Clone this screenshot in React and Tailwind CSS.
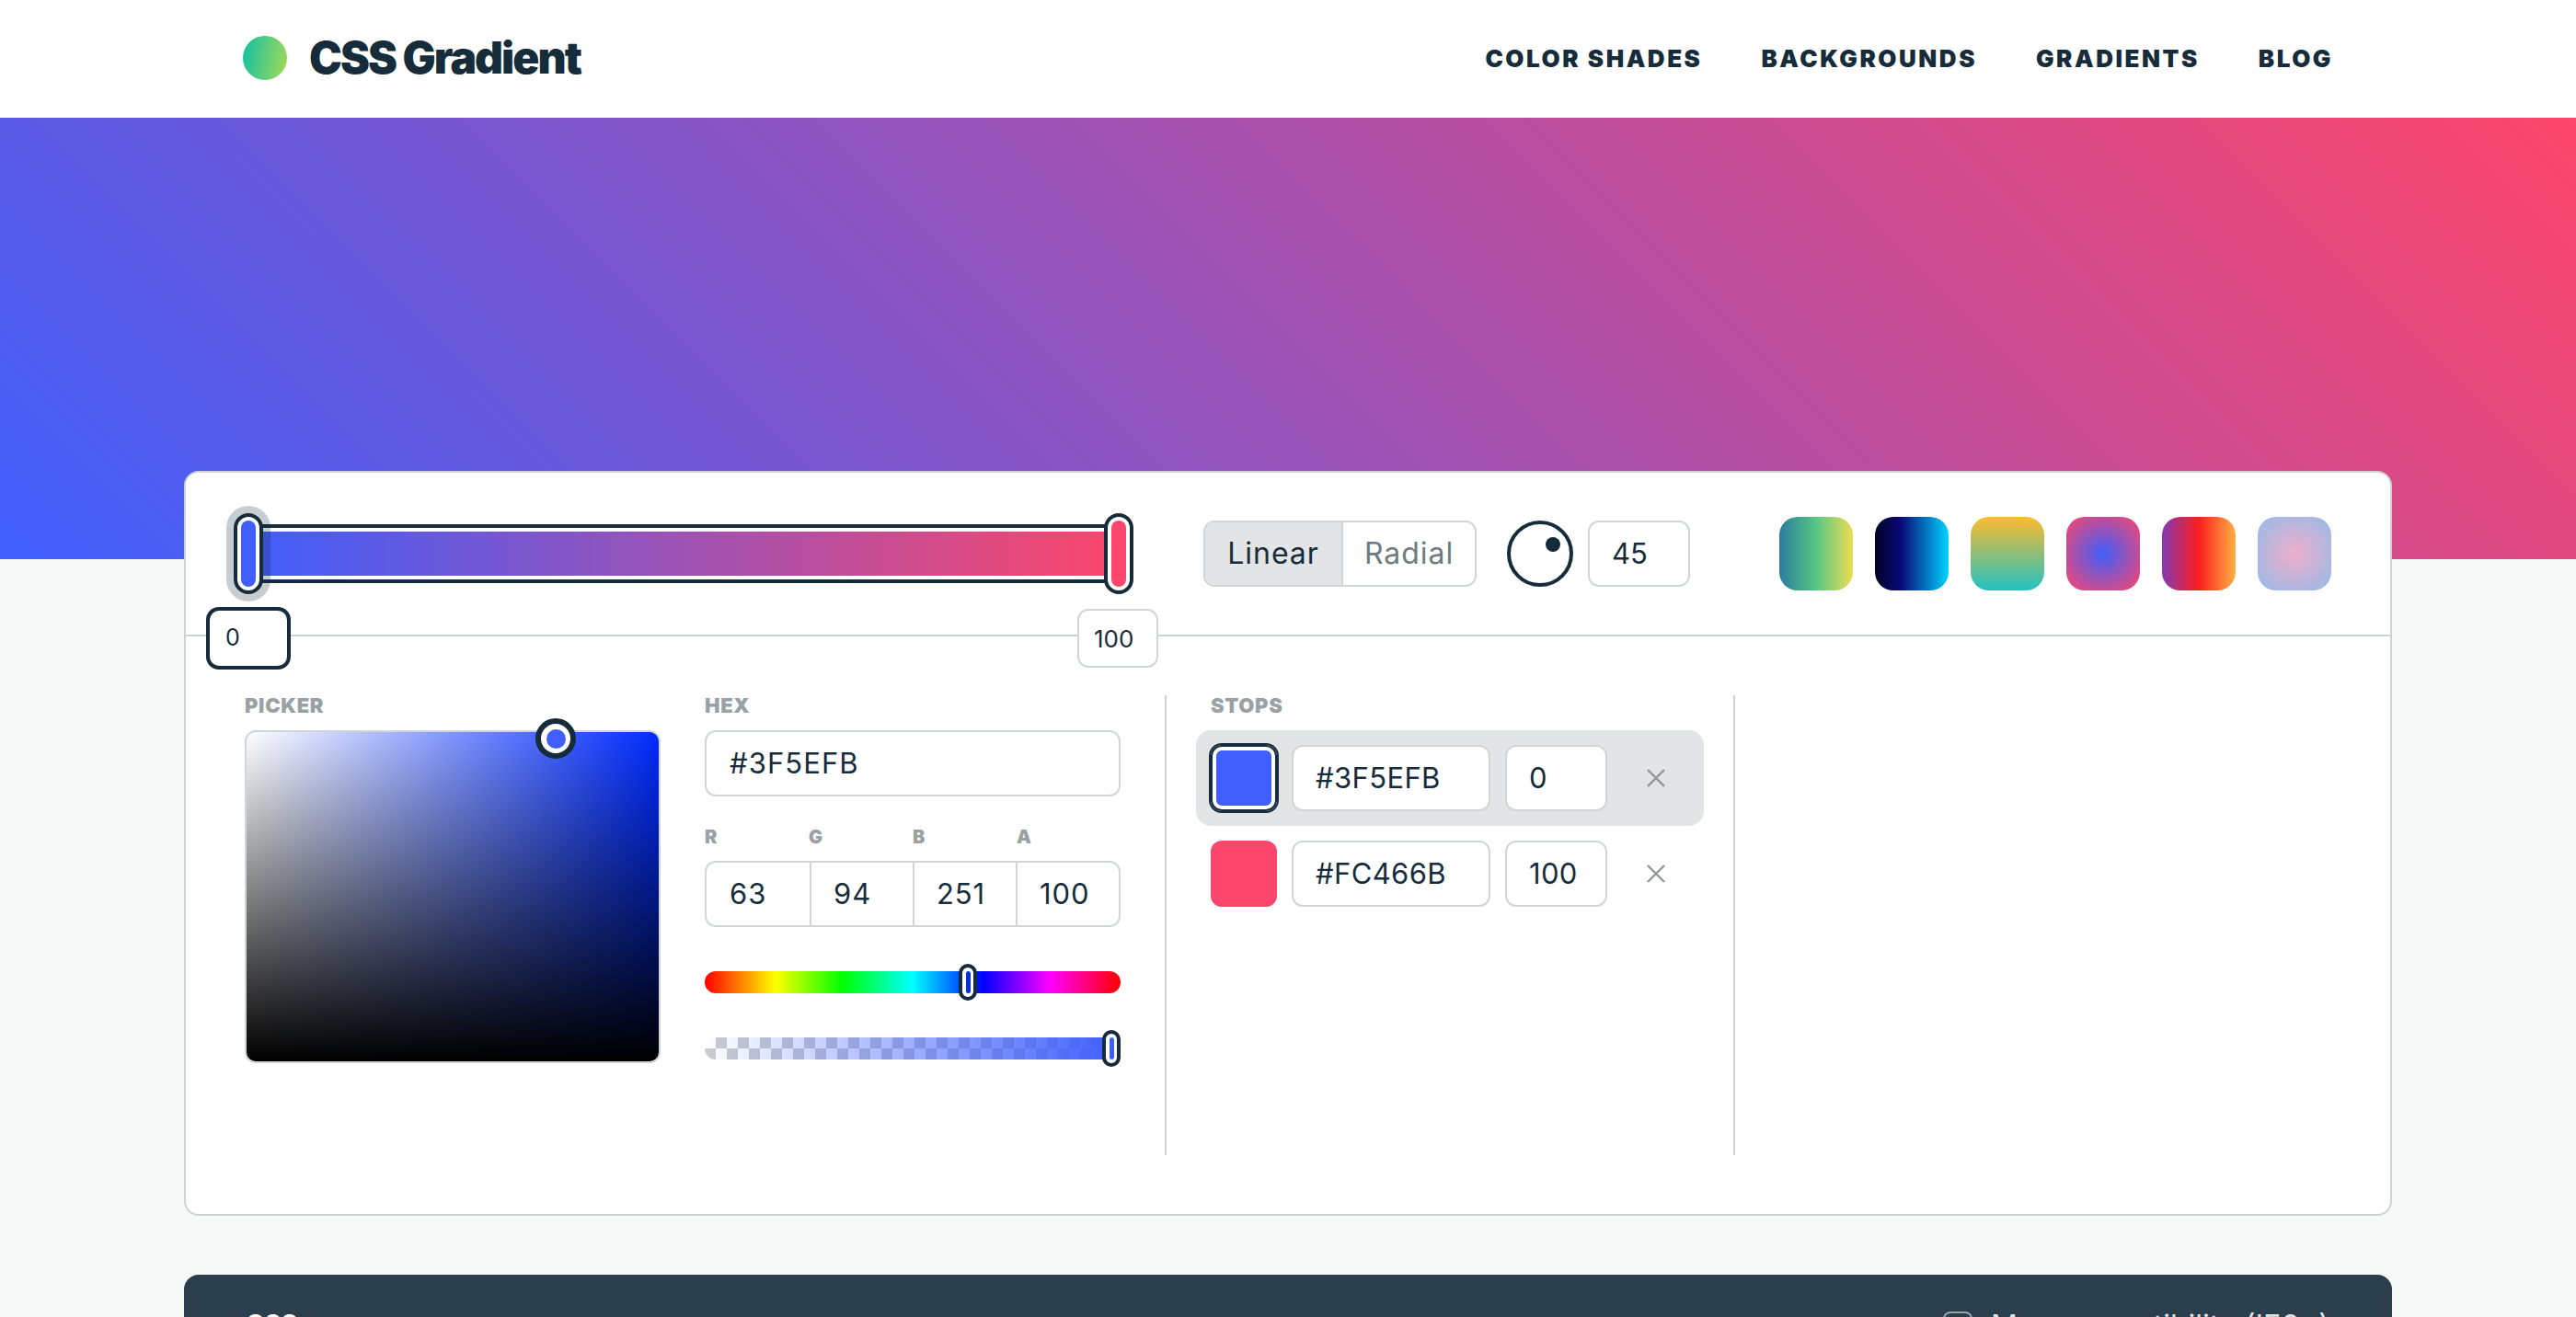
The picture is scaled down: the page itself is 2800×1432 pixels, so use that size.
import React from "react";

function Label({ children, className = "" }) {
  return (
    <div className={"h-[38px] text-[22px] leading-[22px] font-black tracking-[0.03em] text-[#9aa1a5] " + className}>
      {children}
    </div>
  );
}

function Handle({ fill, className = "" }) {
  return (
    <div
      className={
        "absolute w-8 h-[88px] top-0 rounded-full border-4 border-[#162c3a] bg-white p-1 " + className
      }
    >
      <div className="w-full h-full rounded-full" style={{ background: fill }} />
    </div>
  );
}

function SmallHandle({ className = "", fill }) {
  return (
    <div className={"absolute -top-2 w-5 h-10 rounded-full border-4 border-[#162c3a] bg-white flex items-center justify-center " + className}>
      <div className="w-[5px] h-6 rounded-full" style={{ background: fill }} />
    </div>
  );
}

function Field({ children, className = "" }) {
  return (
    <div className={"h-[72px] flex items-center bg-white border-2 border-[#d2d5d7] rounded-xl text-[31px] text-[#162c3a] " + className}>
      {children}
    </div>
  );
}

function X() {
  return (
    <svg width="20" height="20" viewBox="0 0 20 20" fill="none" stroke="#8f979b" strokeWidth="2.4">
      <path d="M1 1 L19 19 M19 1 L1 19" />
    </svg>
  );
}

function StopRow({ color, hex, pos, active }) {
  return (
    <div className={"h-[104px] pl-4 flex items-center gap-4 rounded-2xl " + (active ? "bg-[#e2e4e6]" : "")}>
      <div
        className={
          "w-[72px] h-[72px] rounded-xl " +
          (active ? "shadow-[0_0_0_2px_#162c3a,inset_0_0_0_2px_#162c3a,inset_0_0_0_6px_#fff]" : "")
        }
        style={{ background: color }}
      />
      <Field className="w-[216px] pl-[24px] tracking-[0.012em]">{hex}</Field>
      <Field className="w-[111px] pl-6 tracking-[0.01em]">{pos}</Field>
      <div className="ml-[27px]">
        <X />
      </div>
    </div>
  );
}

export default function App() {
  return (
    <div className="h-[1432px] overflow-hidden bg-[#f7f8f8] font-['Inter',sans-serif] text-[#162c3a]">
      <header className="h-[128px] bg-white flex items-center justify-between pl-[264px] pr-[264px] pb-[2px]">
        <div className="flex items-center gap-[24px]">
          <div className="w-12 h-12 rounded-full bg-[linear-gradient(100deg,#10bfa5,#a5db55)]" />
          <div className="text-[48px] font-black tracking-[-0.041em] leading-none">CSS Gradient</div>
        </div>
        <nav className="flex items-center gap-16 text-[26px] font-black tracking-[0.097em]">
          <span>COLOR SHADES</span>
          <span>BACKGROUNDS</span>
          <span>GRADIENTS</span>
          <span>BLOG</span>
        </nav>
      </header>

      <div className="h-[480px] bg-[linear-gradient(45deg,#3f5efb,#fc466b)]" />

      <main className="relative mx-[200px] -mt-[96px] h-[810px] bg-white border-2 border-[#d0d3d4] rounded-2xl">
        <section className="relative h-[178px] border-b-2 border-[#d0d3d4] flex items-center pl-[52px]">
          <div className="relative w-[978px] h-[88px] flex items-center px-4 shrink-0">
            <div className="w-full h-16 border-y-4 border-[#162c3a] bg-white py-1">
              <div className="h-full bg-[linear-gradient(90deg,#3f5efb,#fc466b)]" />
            </div>
            <Handle fill="#3f5efb" className="left-0 shadow-[0_0_0_8px_rgba(22,44,58,0.24)]" />
            <Handle fill="#fc466b" className="right-0" />
          </div>

          <div className="ml-[76px] w-[297px] h-[72px] flex border-2 border-[#d2d5d7] rounded-xl overflow-hidden text-[32px] tracking-[0.03em] shrink-0">
            <div className="w-[150px] bg-[#e2e4e6] border-r-2 border-[#d2d5d7] flex items-center justify-center">Linear</div>
            <div className="flex-1 flex items-center justify-center text-[#6f7b80]">Radial</div>
          </div>

          <div className="relative ml-[33px] w-[72px] h-[72px] rounded-full border-4 border-[#162c3a] shrink-0">
            <div className="absolute left-[38px] top-[14px] w-4 h-4 rounded-full bg-[#162c3a]" />
          </div>
          <Field className="ml-4 w-[111px] pl-6 shrink-0">45</Field>

          <div className="ml-[97px] flex gap-6 shrink-0">
            <div className="w-20 h-20 rounded-[20px] bg-[linear-gradient(90deg,#2a7b9b,#57c785_50%,#eddd53)]" />
            <div className="w-20 h-20 rounded-[20px] bg-[linear-gradient(90deg,#020024,#090979_35%,#00d4ff)]" />
            <div className="w-20 h-20 rounded-[20px] bg-[linear-gradient(0deg,#22c1c3,#fdbb2d)]" />
            <div className="w-20 h-20 rounded-[20px] bg-[radial-gradient(circle,#3f5efb,#fc466b)]" />
            <div className="w-20 h-20 rounded-[20px] bg-[linear-gradient(90deg,#833ab4,#fd1d1d_50%,#fcb045)]" />
            <div className="w-20 h-20 rounded-[20px] bg-[radial-gradient(circle,#eeaeca,#94bbe9)]" />
          </div>

          <div className="absolute left-[24px] top-[148px] w-[88px] h-16 bg-white border-2 border-[#162c3a] shadow-[0_0_0_2px_#162c3a] rounded-xl flex items-center pl-[17px] text-[25px]">0</div>
          <div className="absolute left-[969px] top-[148px] w-[88px] h-16 bg-white border-2 border-[#d2d5d7] rounded-xl flex items-center pl-4 text-[26px]">100</div>
        </section>

        <section className="flex pt-16 pl-[64px]">
          <div className="w-[452px] shrink-0">
            <Label>PICKER</Label>
            <div className="relative h-[362px] rounded-xl border-2 border-[#d0d5dc] bg-[linear-gradient(to_top,#000,transparent),linear-gradient(to_right,#fff,transparent),linear-gradient(#002bff,#002bff)]">
              <div className="absolute left-[314px] -top-[15px] w-11 h-11 rounded-full border-[6px] border-[#162c3a] bg-white flex items-center justify-center">
                <div className="w-[21px] h-[21px] rounded-full bg-[#3f5efb]" />
              </div>
            </div>
          </div>

          <div className="ml-[48px] w-[452px] shrink-0">
            <Label>HEX</Label>
            <Field className="pl-[25px] tracking-[0.035em]">#3F5EFB</Field>
            <div className="grid grid-cols-4 mt-8 h-6 mb-[14px] text-[20px] leading-6 font-black text-[#9aa1a5]">
              <span>R</span>
              <span>G</span>
              <span>B</span>
              <span>A</span>
            </div>
            <div className="h-[72px] grid grid-cols-4 border-2 border-[#d2d5d7] rounded-xl text-[31px] tracking-[0.03em]">
              <div className="flex items-center pl-[25px]">63</div>
              <div className="flex items-center pl-6 border-l-2 border-[#d2d5d7]">94</div>
              <div className="flex items-center pl-6 border-l-2 border-[#d2d5d7]">251</div>
              <div className="flex items-center pl-6 border-l-2 border-[#d2d5d7]">100</div>
            </div>
            <div className="relative mt-12 h-6 rounded-full bg-[linear-gradient(90deg,#f00,#ff0_17%,#0f0_33%,#0ff_50%,#00f_67%,#f0f_83%,#f00)]">
              <SmallHandle className="left-[276px]" fill="#0030e0" />
            </div>
            <div className="relative mt-12 h-6 rounded-full bg-[linear-gradient(90deg,rgba(63,94,251,0),#3f5efb),conic-gradient(#c9cccf_25%,#fff_0_50%,#c9cccf_0_75%,#fff_0)] bg-[length:100%_100%,24px_24px]">
              <SmallHandle className="right-0" fill="#3f5efb" />
            </div>
          </div>

          <div className="ml-[48px] w-[620px] h-[500px] border-x-2 border-[#d0d3d4] px-8 shrink-0">
            <Label className="pl-4">STOPS</Label>
            <StopRow color="#3f5efb" hex="#3F5EFB" pos="0" active />
            <StopRow color="#fc466b" hex="#FC466B" pos="100" />
          </div>
        </section>
      </main>

      <footer className="mx-[200px] mt-16 h-[300px] bg-[#2a3f4b] rounded-t-2xl flex justify-between items-start pl-[68px] pr-[68px] pt-[40px] text-white">
        <div className="text-[25px] font-black tracking-[0.06em] leading-none">CSS</div>
        <div className="flex items-start gap-5 text-[32px] leading-none text-[#dfe3e5]">
          <div className="w-8 h-8 border-2 border-[#99a5ad] rounded-lg" />
          <span>Max compatibility (IE6+)</span>
        </div>
      </footer>
    </div>
  );
}
